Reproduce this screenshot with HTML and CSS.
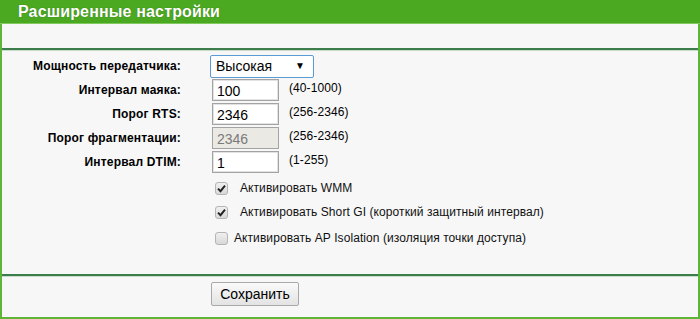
FILE: index.html
```
<!DOCTYPE html>
<html lang="ru">
<head>
<meta charset="utf-8">
<link rel="stylesheet" href="styles.css">
</head>
<body>
<div class="panel">
  <div class="header">Расширенные настройки</div>
  <div class="spacer"></div>
  <div class="sep"></div>
  <div class="form">
    <div class="row">
      <div class="label">Мощность передатчика:</div>
      <div class="field">
        <span class="selectwrap">
          <select class="select"><option>Высокая</option></select>
          <span class="arrow">▼</span>
        </span>
      </div>
    </div>
    <div class="row">
      <div class="label">Интервал маяка:</div>
      <div class="field"><input class="text" type="text" value="100"><span class="hint">(40-1000)</span></div>
    </div>
    <div class="row">
      <div class="label">Порог RTS:</div>
      <div class="field"><input class="text" type="text" value="2346"><span class="hint">(256-2346)</span></div>
    </div>
    <div class="row">
      <div class="label">Порог фрагментации:</div>
      <div class="field"><input class="text" type="text" value="2346" disabled><span class="hint">(256-2346)</span></div>
    </div>
    <div class="row">
      <div class="label">Интервал DTIM:</div>
      <div class="field"><input class="text" type="text" value="1"><span class="hint">(1-255)</span></div>
    </div>
    <div class="checks">
      <div class="check check1">
        <span class="cb"><svg width="9" height="9" viewBox="0 0 9 9"><path d="M1 4.6 L3.5 7.2 L8 1.6" fill="none" stroke="#222" stroke-width="1.9"/></svg></span>
        <span class="cblabel">Активировать WMM</span>
      </div>
      <div class="check check2">
        <span class="cb"><svg width="9" height="9" viewBox="0 0 9 9"><path d="M1 4.6 L3.5 7.2 L8 1.6" fill="none" stroke="#222" stroke-width="1.9"/></svg></span>
        <span class="cblabel">Активировать Short GI (короткий защитный интервал)</span>
      </div>
      <div class="check check3">
        <span class="cb"></span>
        <span class="cblabel near">Активировать AP Isolation (изоляция точки доступа)</span>
      </div>
    </div>
  </div>
  <div class="sep"></div>
  <div class="footer">
    <button class="btn" type="button">Сохранить</button>
  </div>
</div>
</body>
</html>
```
FILE: styles.css
```
html, body {
  margin: 0;
  padding: 0;
  background: #f7f7f7;
}
body {
  font-family: "Liberation Sans", Arial, sans-serif;
  color: #000;
  width: 700px;
  height: 319px;
  overflow: hidden;
}
.panel {
  box-sizing: border-box;
  width: 700px;
  height: 319px;
  border-left: 2px solid #5db637;
  border-right: 2px solid #5db637;
  border-bottom: 2px solid #5db637;
  background: #f7f7f7;
}
.header {
  height: 23px;
  background: #4ba821;
  border-bottom: 1px solid #7fc95e;
  color: #fff;
  font-weight: bold;
  font-size: 16px;
  letter-spacing: 0.15px;
  line-height: 23px;
  padding-left: 18px;
  margin-left: -2px;
  margin-right: -2px;
  text-shadow: 0 0 1px #2f6a12;
}
.spacer {
  height: 24px;
}
.sep {
  height: 2px;
  background: #3d7d4c;
  border-bottom: 1px solid #c9dccb;
}
.form {
  padding-top: 3px;
  height: 223px;
  box-sizing: border-box;
}
.row {
  display: flex;
  align-items: center;
  height: 24px;
}
.label {
  width: 179px;
  text-align: right;
  font-weight: bold;
  font-size: 12px;
  letter-spacing: 0.18px;
}
.field {
  display: flex;
  align-items: center;
  margin-left: 29px;
}
.selectwrap {
  position: relative;
  display: inline-block;
}
.select {
  appearance: none;
  -webkit-appearance: none;
  width: 104px;
  height: 23px;
  box-sizing: border-box;
  border: 1px solid #5b9bd5;
  border-radius: 2px;
  background: #fff;
  font-family: "Liberation Sans", Arial, sans-serif;
  font-size: 14px;
  padding: 0 0 0 5px;
  margin: 0;
  color: #000;
  outline: none;
}
.arrow {
  position: absolute;
  right: 9px;
  top: 5px;
  font-size: 10px;
  pointer-events: none;
}
.text {
  width: 67px;
  height: 22px;
  box-sizing: border-box;
  margin: 0 0 0 2px;
  border: 1px solid #a3a3a3;
  box-shadow: inset 0 0 0 1px #e2e2e2;
  background: #fff;
  font-family: "Liberation Sans", Arial, sans-serif;
  font-size: 14px;
  padding: 2px 0 0 4px;
  color: #000;
}
.text:disabled {
  background: #ebe9e4;
  color: #7a7a7a;
  box-shadow: none;
}
.hint {
  font-size: 12px;
  letter-spacing: 0.08px;
  margin-left: 10px;
  margin-top: -5px;
}
.checks {
  padding-left: 213px;
  padding-top: 2px;
}
.check {
  display: flex;
  align-items: center;
  height: 24px;
}
.check3 {
  margin-top: 2px;
}
.cb {
  box-sizing: border-box;
  width: 13px;
  height: 13px;
  border: 1px solid #b5b5b5;
  border-radius: 3px;
  background: linear-gradient(#f0f0f0, #d8d8d8);
  display: flex;
  align-items: center;
  justify-content: center;
}
.cblabel {
  font-size: 12px;
  letter-spacing: 0.08px;
  margin-left: 12px;
  color: #111;
}
.cblabel.near {
  margin-left: 6px;
}
.footer {
  padding-top: 5px;
  padding-left: 209px;
}
.btn {
  width: 88px;
  height: 24px;
  margin: 0;
  padding: 0;
  border: 1px solid #a9a9a9;
  border-radius: 2px;
  background: linear-gradient(#fafafa, #e3e3e3);
  font-family: "Liberation Sans", Arial, sans-serif;
  font-size: 14px;
  color: #000;
}
```
